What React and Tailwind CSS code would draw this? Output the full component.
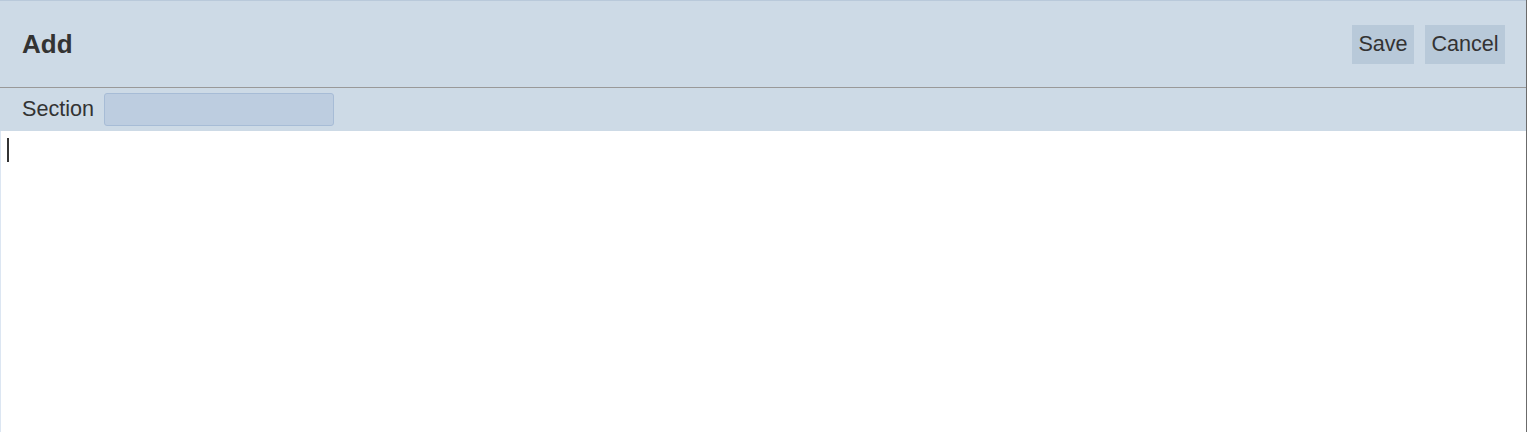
import React from 'react';

export default function App() {
  return (
    <div
      className="w-[1527px] h-[432px] flex flex-col bg-white border-r border-[#6b6b6b] overflow-hidden text-[#333]"
      style={{ fontFamily: '"Liberation Sans", Arial, sans-serif' }}
    >
      {/* Barra superior */}
      <div className="h-[88px] shrink-0 flex items-center justify-between bg-[#cddae6] border-t border-[#b9c9da] border-b border-b-[#999] pl-[22px] pr-[21px]">
        <h1 className="text-[26px] font-bold leading-none">Add</h1>
        <div className="flex items-center gap-[11px]">
          <button className="h-[39px] w-[62px] bg-[#b8c9d9] text-[21.6px] leading-none">Save</button>
          <button className="h-[39px] w-[80px] bg-[#b8c9d9] text-[21.6px] leading-none">Cancel</button>
        </div>
      </div>

      {/* Sección */}
      <div className="h-[43px] shrink-0 flex items-center gap-[10px] bg-[#cddae6] pl-[22px]">
        <span className="text-[21.6px] leading-none pb-[2px]">Section</span>
        <input
          className="w-[230px] h-[33px] rounded-[3px] bg-[#bdcde0] border border-[#a7bcd6] outline-none"
          readOnly
        />
      </div>

      {/* Editor */}
      <div className="flex-1 border-l border-[#dce6f2] pl-[6px] pt-[7px]">
        <div className="w-[2px] h-[24px] bg-[#333]" />
      </div>
    </div>
  );
}
